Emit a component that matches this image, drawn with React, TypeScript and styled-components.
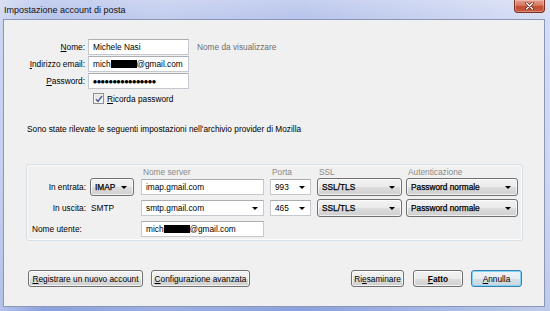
import React from "react";
import styled, { createGlobalStyle } from "styled-components";

const Global = createGlobalStyle`
  html, body { margin: 0; padding: 0; }
  body {
    width: 550px; height: 311px; overflow: hidden;
    font-family: "Liberation Sans", Arial, sans-serif;
    font-size: 8.3px; color: #000;
  }
  #root { width: 550px; height: 311px; }
  * { box-sizing: border-box; }
`;

const Window = styled.div`
  width: 550px; height: 311px;
  display: flex; flex-direction: column;
  background:
    linear-gradient(90deg, rgba(255,255,255,0.35) 0%, rgba(255,255,255,0) 8%, rgba(255,255,255,0.15) 30%, rgba(255,255,255,0) 55%, rgba(255,255,255,0.25) 80%, rgba(255,255,255,0.45) 100%),
    linear-gradient(180deg, #c6cfef 0%, #b2c0ea 8%, #a5b5e6 60%, #8ba0dc 100%);
`;

const TitleBar = styled.div`
  height: 19px; flex: none;
  display: flex; justify-content: space-between; align-items: flex-start;
  padding-left: 4px;
`;

const Title = styled.div`
  padding-top: 4px;
  font-size: 9px; line-height: 12px; color: #111;
`;

const CloseButton = styled.div`
  width: 31px; height: 13px; margin-right: 5px;
  border: 1px solid #7a3124; border-top: none;
  border-radius: 0 0 4px 4px;
  background: linear-gradient(180deg, #e59c8a 0%, #d77a63 45%, #c24f33 50%, #c65a40 100%);
  box-shadow: inset 0 0 0 1px rgba(255,255,255,0.3);
  display: flex; align-items: center; justify-content: center;
`;

const Client = styled.div`
  flex: 1;
  margin: 0 5px 4px 3px;
  border: 1px solid #8a98b8;
  background: #f0f0f0;
  display: flex; flex-direction: column;
`;

const FormGrid = styled.div`
  margin-top: 19px;
  display: grid;
  grid-template-columns: 81px 101px auto;
  grid-auto-rows: 16px;
  row-gap: 1px; column-gap: 3px;
  align-items: center;
`;

const FieldLabel = styled.label`
  text-align: right; line-height: 16px; color: #000;
`;

const Hint = styled.span`
  margin-left: 5px; color: #6f6f6f;
`;

const TextBox = styled.div<{ $w?: number }>`
  width: ${(p) => (p.$w ? `${p.$w}px` : "100%")};
  height: 16px;
  background: #fff;
  border: 1px solid #c5c8cf;
  border-top-color: #abadb3;
  padding-left: 4px;
  display: flex; align-items: center;
  color: #000; white-space: nowrap;
`;

const Redacted = styled.span`
  display: inline-block; width: 26px; height: 8px; background: #000;
`;

const Dots = styled.span`
  font-family: "DejaVu Sans", sans-serif;
  font-size: 4.5px; letter-spacing: 0; color: #000;
`;

const CheckRow = styled.div`
  margin: 4px 0 0 89px;
  display: flex; align-items: center; gap: 3px;
  height: 11px;
`;

const CheckBox = styled.div`
  width: 11px; height: 11px;
  border: 1px solid #8e8f8f;
  background: linear-gradient(135deg, #dcdcdc, #fdfdfd);
  box-shadow: inset 0 0 0 1px #f4f4f4;
  display: flex; align-items: center; justify-content: center;
`;

const Sentence = styled.div`
  margin: 20px 0 0 23px;
  line-height: 11px;
`;

const GroupBox = styled.div`
  margin: 29px 0 0 22px;
  width: 497px;
  border: 1px solid #d5dfe5;
  border-radius: 3px;
  box-shadow: inset 0 0 0 1px #fbfbfb;
  padding: 1px 0 2px 0;
`;

const GroupGrid = styled.div`
  display: grid;
  grid-template-columns: 63px 51px 129px 47px 89px 112px;
  grid-template-rows: 12px 21px 21px 18px;
  align-items: start;
`;

const ColHead = styled.div`
  line-height: 12px; color: #8a8a8a; padding-left: 2px;
`;

const RowLabel = styled.div<{ $left?: boolean }>`
  line-height: 18px;
  text-align: ${(p) => (p.$left ? "left" : "right")};
  padding: ${(p) => (p.$left ? "0 0 0 5px" : "0 4px 0 0")};
  grid-column: ${(p) => (p.$left ? "span 2" : "auto")};
  white-space: nowrap;
`;

const Plain = styled.div`
  line-height: 18px; padding-left: 1px;
`;

const Select = styled.div<{ $w: number }>`
  width: ${(p) => p.$w}px; height: 18px;
  border: 1px solid #707070; border-radius: 3px;
  background: linear-gradient(180deg, #f2f2f2 0%, #ebebeb 50%, #dddddd 51%, #cfcfcf 100%);
  box-shadow: inset 0 0 0 1px rgba(255,255,255,0.7);
  display: flex; align-items: center; justify-content: space-between;
  padding: 0 6px 0 4px;
  color: #000;
  -webkit-text-stroke: 0.25px #000;
`;

const Combo = styled(TextBox)`
  justify-content: space-between; padding-right: 5px;
  margin-top: 1px;
`;

const FieldBox = styled(TextBox)`
  margin-top: 1px;
`;

const Arrow = styled.span`
  width: 0; height: 0;
  border-left: 3px solid transparent; border-right: 3px solid transparent;
  border-top: 3px solid #000;
`;

const ButtonRow = styled.div`
  margin-top: auto; margin-bottom: 19px;
  display: flex; align-items: center;
  padding: 0 22px 0 24px;
`;

const Button = styled.button<{ $w: number; $gap?: number; $default?: boolean; $bold?: boolean }>`
  width: ${(p) => p.$w}px; height: 17px;
  margin-left: ${(p) => p.$gap ?? 0}px;
  padding: 0;
  font-family: inherit; font-size: 8.3px; color: #000;
  font-weight: ${(p) => (p.$bold ? "bold" : "normal")};
  border: 1px solid ${(p) => (p.$default ? "#3c7fb1" : "#707070")};
  border-radius: 3px;
  background: ${(p) =>
    p.$default
      ? "linear-gradient(180deg, #eef3f7 0%, #e6ecf1 50%, #d6dfe7 51%, #cad5df 100%)"
      : "linear-gradient(180deg, #f2f2f2 0%, #ebebeb 50%, #dddddd 51%, #cfcfcf 100%)"};
  box-shadow: inset 0 0 0 1px ${(p) => (p.$default ? "#7fd3f4" : "rgba(255,255,255,0.75)")};
`;

const Spacer = styled.div`
  flex: 1;
`;

const U = styled.u`
  text-underline-offset: 1px;
`;

export default function App() {
  return (
    <>
      <Global />
      <Window>
        <TitleBar>
          <Title>Impostazione account di posta</Title>
          <CloseButton>
            <svg width="9" height="8" viewBox="0 0 9 8">
              <path d="M1.5 1 L7.5 7 M7.5 1 L1.5 7" stroke="#5a2318" strokeWidth="2.6" strokeLinecap="round" />
              <path d="M1.5 1 L7.5 7 M7.5 1 L1.5 7" stroke="#fff" strokeWidth="1.4" strokeLinecap="round" />
            </svg>
          </CloseButton>
        </TitleBar>
        <Client>
          <FormGrid>
            <FieldLabel><U>N</U>ome:</FieldLabel>
            <TextBox>Michele Nasi</TextBox>
            <Hint>Nome da visualizzare</Hint>
            <FieldLabel><U>I</U>ndirizzo email:</FieldLabel>
            <TextBox>mich<Redacted />@gmail.com</TextBox>
            <span />
            <FieldLabel><U>P</U>assword:</FieldLabel>
            <TextBox><Dots>●●●●●●●●●●●●●●●●</Dots></TextBox>
            <span />
          </FormGrid>
          <CheckRow>
            <CheckBox>
              <svg width="8" height="8" viewBox="0 0 8 8">
                <path d="M1 4.2 L3 6.5 L7 1" fill="none" stroke="#4a5c8c" strokeWidth="1.4" />
              </svg>
            </CheckBox>
            <span><U>R</U>icorda password</span>
          </CheckRow>
          <Sentence>Sono state rilevate le seguenti impostazioni nell'archivio provider di Mozilla</Sentence>
          <GroupBox>
            <GroupGrid>
              <span />
              <span />
              <ColHead>Nome server</ColHead>
              <ColHead>Porta</ColHead>
              <ColHead>SSL</ColHead>
              <ColHead>Autenticazione</ColHead>

              <RowLabel>In entrata:</RowLabel>
              <Select $w={44}>IMAP<Arrow /></Select>
              <FieldBox $w={123}>imap.gmail.com</FieldBox>
              <Combo $w={41}>993<Arrow /></Combo>
              <Select $w={85}>SSL/TLS<Arrow /></Select>
              <Select $w={112}>Password normale<Arrow /></Select>

              <RowLabel>In uscita:</RowLabel>
              <Plain>SMTP</Plain>
              <Combo $w={123}>smtp.gmail.com<Arrow /></Combo>
              <Combo $w={41}>465<Arrow /></Combo>
              <Select $w={85}>SSL/TLS<Arrow /></Select>
              <Select $w={112}>Password normale<Arrow /></Select>

              <RowLabel $left>Nome utente:</RowLabel>
              <FieldBox $w={123}>mich<Redacted />@gmail.com</FieldBox>
            </GroupGrid>
          </GroupBox>
          <ButtonRow>
            <Button $w={115}><U>R</U>egistrare un nuovo account</Button>
            <Button $w={99} $gap={8}><U>C</U>onfigurazione avanzata</Button>
            <Spacer />
            <Button $w={53}>Ri<U>e</U>saminare</Button>
            <Button $w={50} $gap={9} $bold><U>F</U>atto</Button>
            <Button $w={51} $gap={8} $default><U>A</U>nnulla</Button>
          </ButtonRow>
        </Client>
      </Window>
    </>
  );
}
